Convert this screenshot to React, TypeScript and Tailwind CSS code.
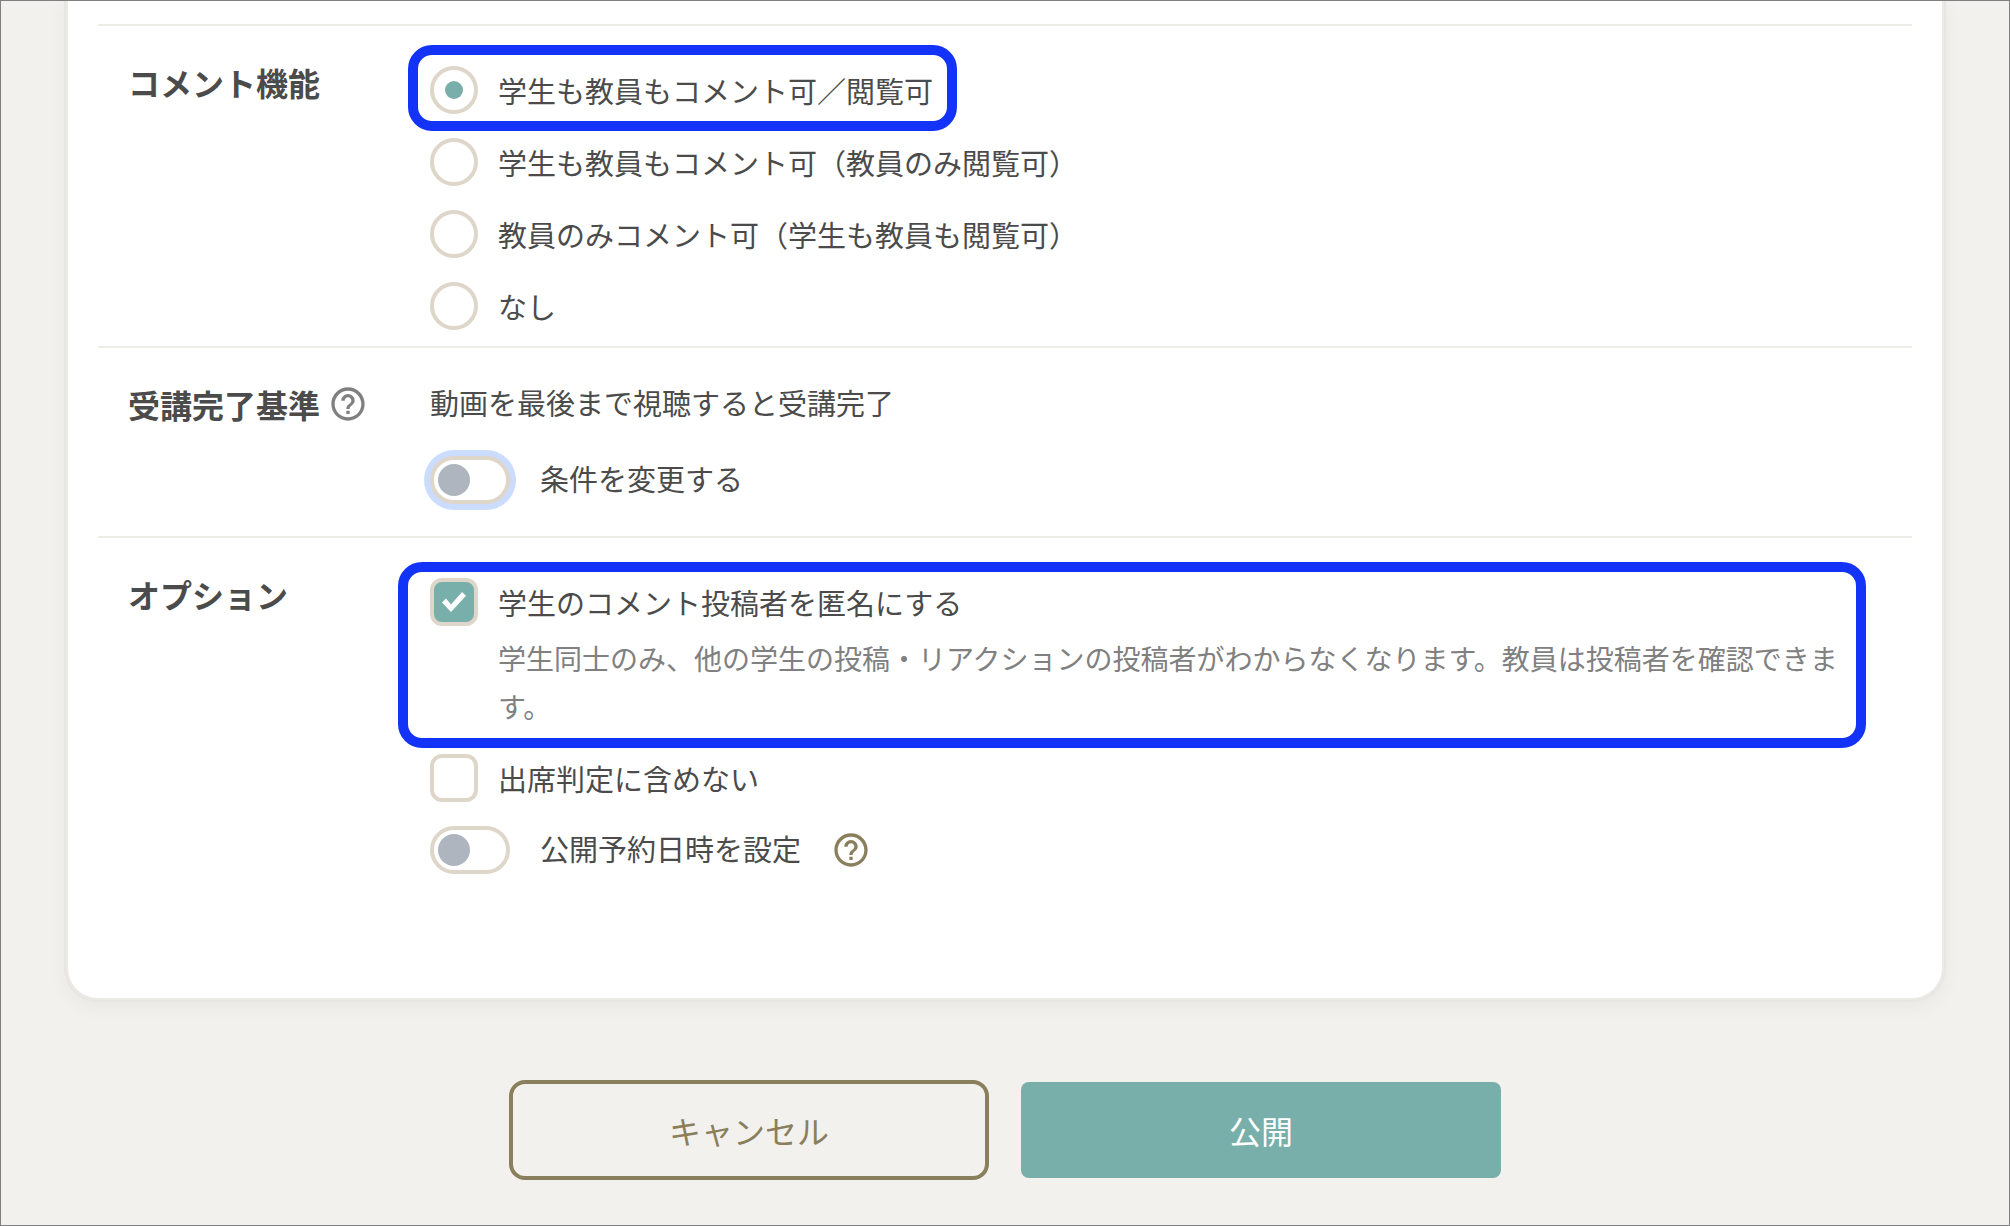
import { useState } from "react";
import type { ReactNode } from "react";
import { MdHelpOutline } from "react-icons/md";

const COMMENT_OPTIONS = [
  "学生も教員もコメント可／閲覧可",
  "学生も教員もコメント可（教員のみ閲覧可）",
  "教員のみコメント可（学生も教員も閲覧可）",
  "なし",
];

interface RowProps {
  title: string;
  help?: boolean;
  last?: boolean;
  children: ReactNode;
}

function Row({ title, help, last, children }: RowProps) {
  return (
    <section
      className={`grid grid-cols-[302px_1fr] px-[30px] pt-10 ${
        last ? "" : "border-b-2 border-[#edede7]"
      }`}
    >
      <div className="flex items-center gap-2 self-start h-8">
        <h2 className="text-[32px] leading-8 font-bold">{title}</h2>
        {help && (
          <button type="button" aria-label="ヘルプ" className="text-[#808080]">
            <MdHelpOutline size={40} />
          </button>
        )}
      </div>
      <div className="min-w-0">{children}</div>
    </section>
  );
}

function Highlight({ className }: { className: string }) {
  return (
    <div
      className={`absolute border-10 border-[#1433f8] rounded-3xl pointer-events-none ${className}`}
    />
  );
}

interface CheckProps {
  id: string;
  label: string;
  checked: boolean;
  onChange: (v: boolean) => void;
}

function Checkbox({ id, label, checked, onChange }: CheckProps) {
  return (
    <div className="flex items-center gap-5">
      <div className="grid shrink-0 place-items-center">
        <input
          id={id}
          type="checkbox"
          checked={checked}
          onChange={(e) => onChange(e.target.checked)}
          className="col-start-1 row-start-1 appearance-none size-12 rounded-xl border-4 border-[#ddd6c9] bg-white checked:bg-[#79afaa]"
        />
        {checked && (
          <svg
            viewBox="0 0 24 20"
            className="col-start-1 row-start-1 w-6 h-5 pointer-events-none"
            fill="#fff"
          >
            <path d="M0 10.5L4 6.5L9 12.5L20 0L24 3.8L9 20Z" />
          </svg>
        )}
      </div>
      <label htmlFor={id} className="text-[29px] leading-12">
        {label}
      </label>
    </div>
  );
}

function Toggle({ id, label, checked, onChange }: CheckProps) {
  return (
    <div className="flex items-start gap-[30px]">
      <input
        id={id}
        type="checkbox"
        role="switch"
        checked={checked}
        onChange={(e) => onChange(e.target.checked)}
        className="appearance-none shrink-0 w-20 h-12 p-1 rounded-full border-4 border-[#ddd6c9] bg-white outline-none
                   focus:ring-6 focus:ring-[#ccdcfe]
                   before:block before:size-8 before:rounded-full before:bg-[#aeb5be]
                   checked:before:ml-8 checked:before:bg-[#79afaa]"
        autoFocus={id === "criteria"}
      />
      <label htmlFor={id} className="text-[29px] leading-11">
        {label}
      </label>
    </div>
  );
}

export default function App() {
  const [comment, setComment] = useState(0);
  const [criteria, setCriteria] = useState(false);
  const [anonymous, setAnonymous] = useState(true);
  const [excluded, setExcluded] = useState(false);
  const [scheduled, setScheduled] = useState(false);

  return (
    <div className="min-h-screen overflow-hidden border border-[#7f7f7f] bg-[#f3f1ee] text-[#4b4b4b] font-['Noto_Sans_CJK_JP',sans-serif]">
      <main className="mx-[65px] px-[30px] pb-[124px] bg-white border-x-2 border-b-2 border-[#ebebe5] rounded-b-[32px] shadow-[0_0_0_2px_#e8e6e2,0_6px_20px_2px_rgba(0,0,0,0.04)]">
        <div className="h-[25px] border-b-2 border-[#edede7]" />

        <Row title="コメント機能">
          <div className="flex flex-col items-start gap-6 pb-4">
            {COMMENT_OPTIONS.map((label, i) => (
              <div key={label} className="relative flex items-center gap-5">
                <input
                  id={`comment-${i}`}
                  type="radio"
                  name="comment"
                  checked={comment === i}
                  onChange={() => setComment(i)}
                  className="appearance-none shrink-0 grid place-items-center size-12 rounded-full border-4 border-[#ddd6c9] bg-white
                             checked:before:size-[18px] checked:before:rounded-full checked:before:bg-[#79afaa]"
                />
                <label htmlFor={`comment-${i}`} className="text-[29px] leading-12">
                  {label}
                </label>
                {i === 0 && <Highlight className="-top-[21px] -bottom-[17px] -left-[22px] -right-6" />}
              </div>
            ))}
          </div>
        </Row>

        <Row title="受講完了基準" help>
          <div className="pb-8">
            <p className="text-[29px] leading-7 mb-10">
              動画を最後まで視聴すると受講完了
            </p>
            <Toggle
              id="criteria"
              label="条件を変更する"
              checked={criteria}
              onChange={setCriteria}
            />
          </div>
        </Row>

        <Row title="オプション" last>
          <div className="relative mb-6">
            <Checkbox
              id="anonymous"
              label="学生のコメント投稿者を匿名にする"
              checked={anonymous}
              onChange={setAnonymous}
            />
            <p className="mt-2 pl-[68px] text-[28px] leading-12 text-[#808080]">
              学生同士のみ、他の学生の投稿・リアクションの投稿者がわからなくなります。教員は投稿者を確認できます。
            </p>
            <Highlight className="-top-4 -bottom-[18px] -left-8 right-4" />
          </div>
          <Checkbox
            id="excluded"
            label="出席判定に含めない"
            checked={excluded}
            onChange={setExcluded}
          />
          <div className="flex items-center gap-[30px] mt-6">
            <Toggle
              id="scheduled"
              label="公開予約日時を設定"
              checked={scheduled}
              onChange={setScheduled}
            />
            <button type="button" aria-label="ヘルプ" className="text-[#8a7f5c]">
              <MdHelpOutline size={40} />
            </button>
          </div>
        </Row>
      </main>

      <div className="flex items-center justify-center gap-8 px-8 pt-20 pb-10">
        <button
          type="button"
          className="w-[480px] h-25 border-4 border-[#8a7f5c] rounded-2xl text-[32px] text-[#8a7f5c]"
        >
          キャンセル
        </button>
        <button
          type="button"
          className="w-[480px] h-24 rounded-lg bg-[#79afaa] text-[32px] text-white"
        >
          公開
        </button>
      </div>
    </div>
  );
}
